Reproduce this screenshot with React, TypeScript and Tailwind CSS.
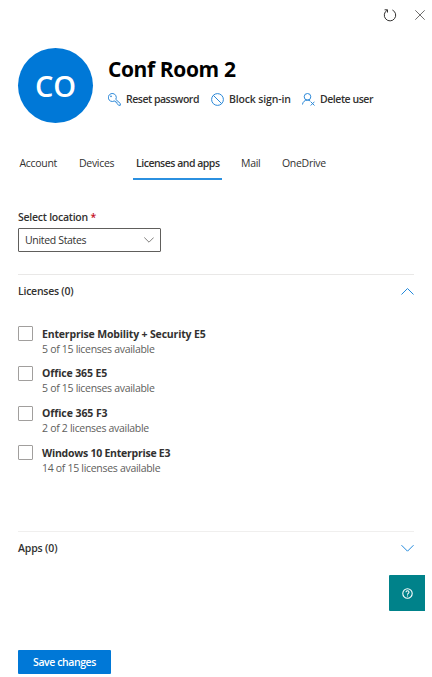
import React from 'react';

const licenses = [
  { name: 'Enterprise Mobility + Security E5', detail: '5 of 15 licenses available', spacing: 'tracking-[-0.17px]' },
  { name: 'Office 365 E5', detail: '5 of 15 licenses available', spacing: 'tracking-[-0.12px]' },
  { name: 'Office 365 F3', detail: '2 of 2 licenses available', spacing: 'tracking-[-0.08px]' },
  { name: 'Windows 10 Enterprise E3', detail: '14 of 15 licenses available', spacing: 'tracking-[-0.24px]' },
];

function Chevron({ up = false }: { up?: boolean }) {
  return (
    <svg className="h-[7px] w-[13px]" viewBox="0 0 13 7" fill="none" stroke="#2088dc" strokeWidth="1">
      <path d={up ? 'M.5 6.500 6.500.5l6 6' : 'M.5.2l6 6 6-6'} />
    </svg>
  );
}

export default function App() {
  return (
    <main className="flex h-[677px] w-[432px] flex-col overflow-hidden bg-white pr-[18px] pl-[18px] font-['Open_Sans','Noto_Sans',sans-serif] text-[10.5px] leading-[15px] text-[#323130]">
      <div className="-mr-[11px] flex h-[30px] shrink-0 items-center justify-end gap-[18px]">
        <button aria-label="Refresh">
          <svg className="h-[14px] w-[14px]" viewBox="0 0 14 14" fill="none" stroke="#323130" strokeWidth="1">
            <path d="M4.200 2.200A5.700 5.700 0 1 0 9.400 2M1.600 1.800h2.900v2.700" />
          </svg>
        </button>
        <button aria-label="Close">
          <svg className="h-[10px] w-[10px]" viewBox="0 0 10 10" stroke="#605e5c" strokeWidth=".9">
            <path d="M.3.3l9.4 9.4M9.7.3.3 9.7" />
          </svg>
        </button>
      </div>

      <header className="mt-[18px] flex h-[75px] shrink-0 gap-[15px]">
        <div className="flex h-[75px] w-[75px] shrink-0 items-center justify-center rounded-full bg-[#0078d7] text-[29px] font-semibold text-white">
          CO
        </div>
        <div className="flex flex-col whitespace-nowrap">
          <h1 className="mt-[6px] text-[21px] leading-[30px] font-bold tracking-[-0.38px] text-black">Conf Room 2</h1>
          <div className="mt-[8px] flex h-[15px] items-center font-semibold">
            <span className="flex w-[103px] items-center gap-[5px] tracking-[-0.48px]">
              <svg className="h-[13px] w-[13px] shrink-0" viewBox="0 0 13 13" fill="none" stroke="#2b88d8" strokeWidth="1">
                <path d="M7.800 6.400A4 4 0 1 0 6.200 8l1 .1.4 1 1.200.2.3 1.200 1.500 1.800h1.700v-1.800L7.800 6.400Z" />
                <circle cx="3" cy="3.3" r=".5" />
              </svg>
              Reset password
            </span>
            <span className="flex w-[91px] items-center gap-[5px] tracking-[-0.15px]">
              <svg className="h-[13px] w-[13px] shrink-0" viewBox="0 0 13 13" fill="none" stroke="#2b88d8" strokeWidth="1">
                <circle cx="6.5" cy="6.5" r="5.9" />
                <path d="m2.3 2.3 8.4 8.4" />
              </svg>
              Block sign-in
            </span>
            <span className="flex items-center gap-[5px] tracking-[-0.46px]">
              <svg className="h-[13px] w-[13px] shrink-0" viewBox="0 0 13 13" fill="none" stroke="#2b88d8" strokeWidth="1">
                <circle cx="5.500" cy="3.800" r="3.300" />
                <path d="M.5 11.500C.7 9 2.600 7.100 5.500 7.100c1.100 0 2 .3 2.700.9M8.700 8.700l3.800 3.800M12.500 8.700 8.700 12.500" />
              </svg>
              Delete user
            </span>
          </div>
        </div>
      </header>

      <nav className="mt-[31px] flex h-[26px] shrink-0 pl-[1.5px] tracking-[-0.3px] whitespace-nowrap">
        <span className="w-[59.5px] pt-[2px]">Account</span>
        <span className="w-[54px] pt-[2px]">Devices</span>
        <span className="h-[26px] w-[89px] border-b-2 border-[#2b90e0] pt-[2px] pl-[3px] font-semibold tracking-[-0.49px]">Licenses and apps</span>
        <span className="w-[60px] pt-[2px] pl-[19px]">Mail</span>
        <span className="pt-[2px]">OneDrive</span>
      </nav>

      <label className="mt-[30px] h-[15px] shrink-0 font-semibold tracking-[-0.25px]">
        Select location <span className="text-[#c50f1f]">*</span>
      </label>
      <div className="mt-[3px] flex h-[24px] w-[143px] shrink-0 items-center justify-between rounded-[1px] border border-[#605e5c] pr-[6px] pl-[6px] tracking-[-0.33px]">
        United States
        <svg className="h-[6px] w-[10px]" viewBox="0 0 10 6" fill="none" stroke="#605e5c" strokeWidth=".8">
          <path d="m.3.5 4.700 4.700L9.700.5" />
        </svg>
      </div>

      <section className="mt-[22px] flex h-[257px] w-[396px] shrink-0 flex-col border-t border-[#e9e8e7]">
        <div className="mt-[9px] flex h-[15px] items-center justify-between font-semibold tracking-[-0.25px]">
          <h2>Licenses (0)</h2>
          <Chevron up />
        </div>
        <ul className="mt-[26px]">
          {licenses.map((item) => (
            <li key={item.name} className="flex h-[39.8px] gap-[9px] whitespace-nowrap">
              <span className="mt-[1px] h-[15px] w-[15px] shrink-0 rounded-[1px] border border-[#a19f9d]" />
              <div className="pt-[1.7px]">
                <p className={`font-bold ${item.spacing}`}>{item.name}</p>
                <p className="tracking-[-0.3px] text-[#605e5c]">{item.detail}</p>
              </div>
            </li>
          ))}
        </ul>
      </section>

      <section className="flex h-[44px] w-[396px] shrink-0 flex-col border-t border-[#f0efee]">
        <div className="mt-[9px] flex h-[15px] items-center justify-between font-semibold tracking-[-0.15px]">
          <h2>Apps (0)</h2>
          <Chevron />
        </div>
      </section>

      <button aria-label="Help" className="-mr-[11px] flex h-[36px] w-[36px] shrink-0 items-center justify-center self-end rounded-l-[1px] bg-[#00828a]">
        <svg className="h-[11px] w-[11px]" viewBox="0 0 11 11" fill="none" stroke="white" strokeWidth="1.1">
          <circle cx="5.500" cy="5.500" r="4.700" />
          <path d="M4 4.300c0-2 3-2 3 0C7 5.400 5.500 5.300 5.500 6.700M5.500 7.500v1" />
        </svg>
      </button>

      <button className="mt-[39px] h-[24px] w-[93px] shrink-0 rounded-[1px] bg-[#0078d7] font-semibold tracking-[-0.42px] text-white">Save changes</button>
    </main>
  );
}
